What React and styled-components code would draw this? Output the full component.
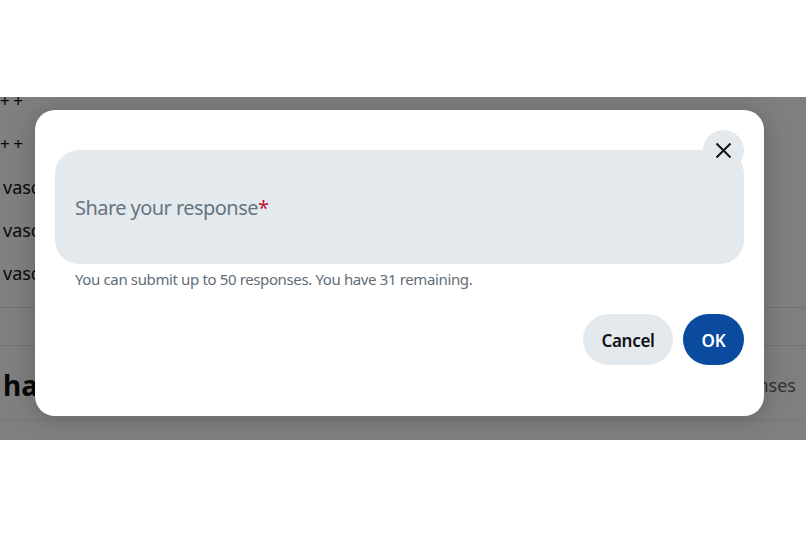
import { createGlobalStyle, styled } from 'styled-components'

const GlobalStyle = createGlobalStyle`
  html, body {
    margin: 0;
    padding: 0;
    background: #fff;
    font-family: "Noto Sans", "Open Sans", sans-serif;
  }
`

const Page = styled.div`
  width: 806px;
  height: 537px;
  padding-top: 97px;
  box-sizing: border-box;
  overflow: hidden;
`

const Viewport = styled.div`
  position: relative;
  height: 343px;
  overflow: hidden;
  background: #fff;
`

const BehindRow = styled.div`
  height: 43.3px;
  padding-left: ${(p) => (p.$marks ? '0' : '3px')};
  font-size: ${(p) => (p.$marks ? '17px' : '18px')};
  letter-spacing: ${(p) => (p.$marks ? '-0.5px' : '0')};
  line-height: 43.3px;
  color: #111;
  margin-top: ${(p) => (p.$first ? '-18px' : '0')};
`

const Divider = styled.div`
  height: 38px;
  margin-top: 12px;
  border-top: 1px solid #e4e4e4;
  box-sizing: border-box;
`

const Summary = styled.div`
  display: flex;
  justify-content: space-between;
  align-items: center;
  height: 76px;
  padding: 3px 10px 0 3px;
  border-top: 1px solid #e4e4e4;
  border-bottom: 1px solid #f0f0f0;
  box-sizing: border-box;
`

const Title = styled.span`
  font-size: 28px;
  font-weight: 700;
  color: #111;
`

const Count = styled.span`
  font-size: 18px;
  color: #666;
`

const Overlay = styled.div`
  position: absolute;
  inset: 0;
  background: rgba(0, 0, 0, 0.5);
  padding: 13px 0 0 35px;
`

const Dialog = styled.div`
  position: relative;
  width: 729px;
  height: 306px;
  padding: 40px 20px 0;
  box-sizing: border-box;
  background: #fff;
  border-radius: 20px;
  box-shadow: 0 2px 24px rgba(0, 0, 0, 0.22);
`

const CloseButton = styled.button`
  position: absolute;
  top: 20px;
  right: 20px;
  display: flex;
  align-items: center;
  justify-content: center;
  width: 41px;
  height: 41px;
  padding: 0;
  border: none;
  border-radius: 50%;
  background: #e4e9ed;
  color: #111;
`

const Field = styled.div`
  display: flex;
  align-items: center;
  height: 114px;
  padding: 0 20px;
  box-sizing: border-box;
  border-radius: 24px;
  background: #e4e9ed;
  font-size: 20px;
  letter-spacing: -0.55px;
  color: #66747f;
`

const Required = styled.span`
  color: #c0102f;
`

const Hint = styled.p`
  margin: 5px 0 0 20px;
  font-size: 15px;
  letter-spacing: -0.37px;
  line-height: 20px;
  color: #5f6d78;
`

const Actions = styled.div`
  display: flex;
  justify-content: flex-end;
  gap: 10px;
  margin-top: 25px;
`

const ActionButton = styled.button`
  height: 51px;
  width: ${(p) => (p.$primary ? '61px' : '90px')};
  padding: 2px 0 0;
  border: none;
  border-radius: 26px;
  font-family: inherit;
  font-size: 17px;
  letter-spacing: -0.3px;
  font-weight: 600;
  background: ${(p) => (p.$primary ? '#0a4a9f' : '#e4e9ed')};
  color: ${(p) => (p.$primary ? '#fff' : '#111')};
`

export default function App() {
  return (
    <Page>
      <GlobalStyle />
      <Viewport>
        <BehindRow $first $marks>+ +</BehindRow>
        <BehindRow $marks>+ +</BehindRow>
        <BehindRow>vascular</BehindRow>
        <BehindRow>vascular</BehindRow>
        <BehindRow>vascular</BehindRow>
        <Divider />
        <Summary>
          <Title>have</Title>
          <Count>19 responses</Count>
        </Summary>
        <Overlay>
          <Dialog>
            <CloseButton aria-label="Close">
              <svg width="17" height="17" viewBox="0 0 17 17" fill="none" stroke="currentColor" strokeWidth="2">
                <path d="M1.5 1.5 15.5 15.5M15.5 1.5 1.5 15.5" />
              </svg>
            </CloseButton>
            <Field>
              <span>
                Share your response<Required>*</Required>
              </span>
            </Field>
            <Hint>You can submit up to 50 responses. You have 31 remaining.</Hint>
            <Actions>
              <ActionButton>Cancel</ActionButton>
              <ActionButton $primary>OK</ActionButton>
            </Actions>
          </Dialog>
        </Overlay>
      </Viewport>
    </Page>
  )
}
